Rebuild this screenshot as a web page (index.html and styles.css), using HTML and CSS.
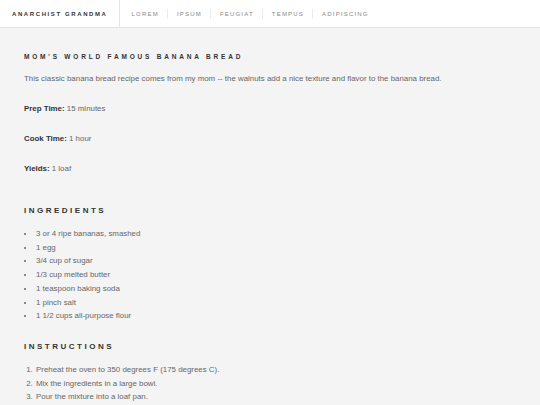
FILE: index.html
```html
<!DOCTYPE html>
<html lang="en">
<head>
    <meta charset="UTF-8">
    <title>Mom's World Famous Banana Bread</title>
    <link rel="stylesheet" href="styles.css">
</head>
<body>
<div class="header">
    <a href="javascript:;" class="logo">Anarchist Grandma</a>
    <ul class="nav">
        <li><a href="javascript:;">Lorem</a></li>
        <li><a href="javascript:;">Ipsum</a></li>
        <li><a href="javascript:;">Feugiat</a></li>
        <li><a href="javascript:;">Tempus</a></li>
        <li><a href="javascript:;">Adipiscing</a></li>
    </ul>
</div>
<div class="main">
    <h1>Mom's World Famous Banana Bread</h1>
    <p class="intro">This classic banana bread recipe comes from my mom -- the walnuts add a nice texture and flavor to the banana bread.</p>
    <p class="meta"><b>Prep Time:</b> 15 minutes</p>
    <p class="meta"><b>Cook Time:</b> 1 hour</p>
    <p class="meta"><b>Yields:</b> 1 loaf</p>

    <h2>Ingredients</h2>
    <ul class="list">
        <li>3 or 4 ripe bananas, smashed</li>
        <li>1 egg</li>
        <li>3/4 cup of sugar</li>
        <li>1/3 cup melted butter</li>
        <li>1 teaspoon baking soda</li>
        <li>1 pinch salt</li>
        <li>1 1/2 cups all-purpose flour</li>
    </ul>

    <h2>Instructions</h2>
    <ol class="list">
        <li>Preheat the oven to 350 degrees F (175 degrees C).</li>
        <li>Mix the ingredients in a large bowl.</li>
        <li>Pour the mixture into a loaf pan.</li>
    </ol>
</div>
</body>
</html>
```

FILE: styles.css
```css
body, div, ul, ol, li, a, h1, h2, p {
    margin: 0;
    padding: 0;
}

body {
    font-family: "Liberation Sans", Arial, sans-serif;
    background: #f4f4f4;
    color: #666;
    font-size: 7.9px;
}

a {
    text-decoration: none;
}

.header {
    display: flex;
    align-items: stretch;
    height: 27px;
    background: #fff;
    border-bottom: 1px solid #e4e4e4;
}

.header .logo {
    display: flex;
    align-items: center;
    padding: 0 11px 0 12px;
    border-right: 1px solid #e4e4e4;
    font-size: 6px;
    font-weight: bold;
    letter-spacing: 1.6px;
    text-transform: uppercase;
    color: #333;
}

.nav {
    display: flex;
    align-items: center;
    list-style: none;
    padding-left: 3px;
}

.nav li {
    padding: 0 8px 0 9px;
    border-left: 1px solid #ececec;
    line-height: 10px;
}

.nav li:first-child {
    border-left: none;
}

.nav a {
    font-size: 6px;
    letter-spacing: 1.2px;
    text-transform: uppercase;
    color: #888;
}

.main {
    padding: 25px 24px 0;
}

h1 {
    font-size: 6.5px;
    letter-spacing: 2.8px;
    text-transform: uppercase;
    color: #333;
    margin-bottom: 13px;
}

.intro, .meta {
    line-height: 12px;
    margin-bottom: 18px;
}

.meta b {
    color: #333;
}

h2 {
    font-size: 8px;
    letter-spacing: 2.5px;
    text-transform: uppercase;
    color: #333;
    margin: 31px 0 12px;
}

.list + h2 {
    margin-top: 19px;
}

.list {
    padding-left: 11px;
}

.list li {
    line-height: 13.7px;
    padding-left: 1px;
}
```
